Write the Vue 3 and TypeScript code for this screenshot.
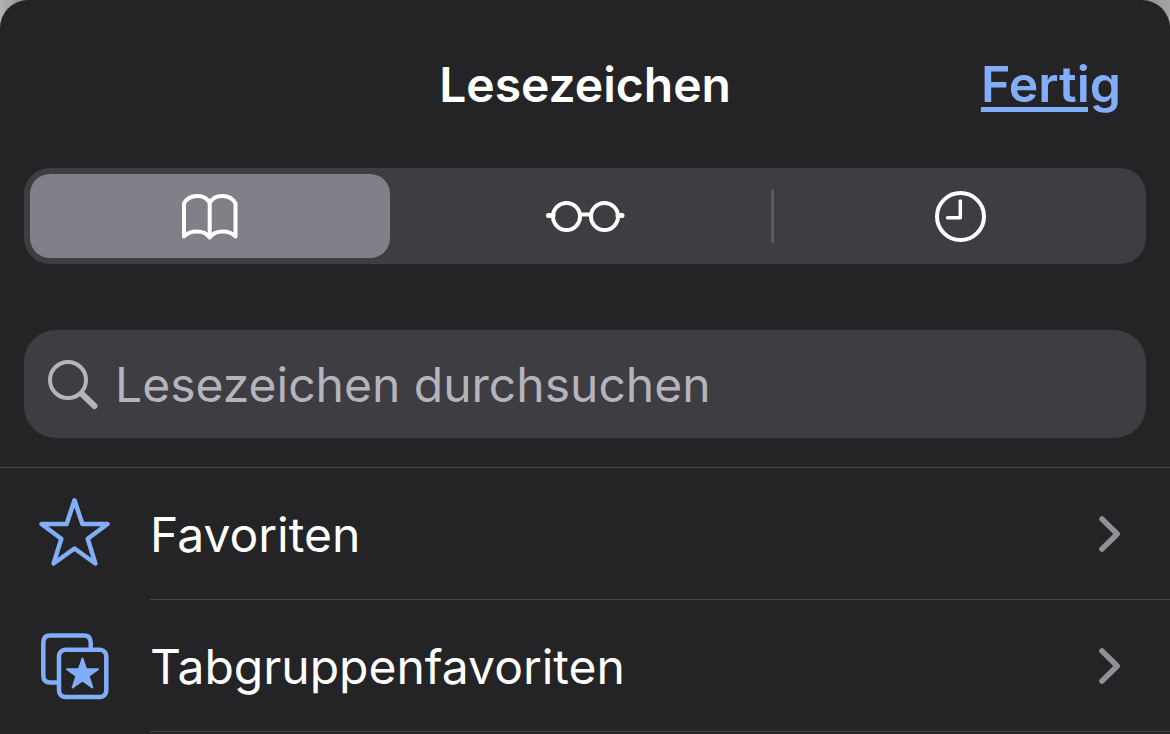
<script setup lang="ts">
import { ref } from 'vue'

type TabId = 'bookmarks' | 'reading' | 'history'

interface Tab {
  id: TabId
  label: string
}

interface Folder {
  id: 'favorites' | 'tabgroups'
  title: string
}

const tabs: Tab[] = [
  { id: 'bookmarks', label: 'Lesezeichen' },
  { id: 'reading', label: 'Leseliste' },
  { id: 'history', label: 'Verlauf' },
]

const folders: Folder[] = [
  { id: 'favorites', title: 'Favoriten' },
  { id: 'tabgroups', title: 'Tabgruppenfavoriten' },
]

const activeTab = ref<TabId>('bookmarks')
const query = ref('')
</script>

<template>
  <main class="sheet">
    <header class="header">
      <h1 class="title">Lesezeichen</h1>
      <button class="done" type="button">Fertig</button>
    </header>

    <div class="tabs" role="tablist">
      <button
        v-for="tab in tabs"
        :key="tab.id"
        class="tab"
        :class="{ active: tab.id === activeTab, divided: tab.id === 'history' && activeTab === 'bookmarks' }"
        type="button"
        role="tab"
        :aria-label="tab.label"
        :aria-selected="tab.id === activeTab"
        @click="activeTab = tab.id"
      >
        <svg v-if="tab.id === 'bookmarks'" class="tab-icon" width="80" height="60" viewBox="0 0 80 60" aria-hidden="true">
          <path d="M39.700 17C35 7.500 19 7.500 14 17.500V50.500C20 44 34 43.500 39.700 51.500C45.500 43.500 59.500 44 65.500 50.500V17.500C60.500 7.500 44.500 7.500 39.700 17V51" />
        </svg>
        <svg v-else-if="tab.id === 'reading'" class="tab-icon" width="80" height="60" viewBox="0 0 80 60" aria-hidden="true">
          <circle cx="21.500" cy="30.500" r="13.500" />
          <circle cx="59.500" cy="30.500" r="13.500" />
          <path d="M35 28.500H46" />
          <path d="M3.500 29.500H8M73 29.500H77" class="temple" />
        </svg>
        <svg v-else class="tab-icon" width="80" height="60" viewBox="0 0 80 60" aria-hidden="true">
          <circle cx="40.500" cy="30.500" r="23.500" />
          <path d="M40.300 15V31.700H27.500" class="hands" />
        </svg>
      </button>
    </div>

    <label class="search">
      <svg class="search-icon" width="52" height="52" viewBox="0 0 52 52" aria-hidden="true">
        <circle cx="21" cy="22" r="18" />
        <path d="M35 36L47.500 48" />
      </svg>
      <input v-model="query" class="search-input" type="text" placeholder="Lesezeichen durchsuchen" aria-label="Lesezeichen durchsuchen" />
    </label>

    <nav class="list" aria-label="Ordner">
      <a v-for="folder in folders" :key="folder.id" class="row" :href="'#' + folder.id">
        <svg v-if="folder.id === 'favorites'" class="row-icon" width="80" height="80" viewBox="0 0 80 80" aria-hidden="true">
          <path d="M39.500 6.300L47.400 30H72.500L52.700 44.800L60.400 69.500L39.500 54.500L18.600 69.500L26.300 44.800L6.500 30H31.600Z" />
        </svg>
        <svg v-else class="row-icon" width="80" height="80" viewBox="0 0 80 80" aria-hidden="true">
          <path d="M24 56.500H15.300Q8.300 56.500 8.300 49.500V16.500Q8.300 9.500 15.300 9.500H48.700Q55.700 9.500 55.700 16.500V23" class="pane" />
          <rect x="24" y="23.700" width="47.300" height="47.300" rx="6.500" class="pane" />
          <path d="M47.500 32.500L51.100 43.300H63L53.600 50L57.400 61.500L47.500 54.500L37.600 61.500L41.400 50L32 43.300H43.900Z" class="solid" />
        </svg>
        <span class="row-body">
          <span class="row-title">{{ folder.title }}</span>
          <svg class="chevron" width="24" height="40" viewBox="0 0 24 40" aria-hidden="true">
            <path d="M5 5L20.200 20L5 35" />
          </svg>
        </span>
      </a>
    </nav>
  </main>
</template>

<style>
body {
  margin: 0;
  background: linear-gradient(90deg, #b4b4b4, #8c8c8c 26px, #929292 calc(100% - 26px), #a4a4a4);
}
</style>

<style scoped>
.sheet {
  box-sizing: border-box;
  min-height: 100vh;
  border-radius: 28px 28px 0 0;
  background: #242426;
  color: #fff;
  font-family: Inter, "Liberation Sans", sans-serif;
  font-size: 48px;
  line-height: 60px;
}

.header {
  display: grid;
  grid-template-columns: 1fr auto 1fr;
  align-items: baseline;
  height: 168px;
  padding: 54px 49px 0;
  box-sizing: border-box;
}

.title {
  grid-column: 2;
  margin: 0;
  font-size: 48px;
  font-weight: 600;
}

.done {
  justify-self: end;
  padding: 0;
  border: 0;
  background: none;
  color: #82adf9;
  font: inherit;
  font-size: 50px;
  font-weight: 600;
  text-decoration: underline;
  text-decoration-thickness: 5px;
  text-underline-offset: 5px;
}

.tabs {
  display: grid;
  grid-template-columns: repeat(3, 1fr);
  gap: 15px;
  margin: 0 24px;
  padding: 6px;
  border-radius: 26px;
  background: #3e3d42;
}

.tab {
  position: relative;
  display: flex;
  align-items: center;
  justify-content: center;
  height: 84px;
  padding: 0;
  border: 0;
  border-radius: 20px;
  background: none;
  color: #fff;
}

.tab.active {
  background: #818088;
}

.tab.divided::before {
  content: "";
  position: absolute;
  left: -9px;
  top: 15px;
  bottom: 15px;
  width: 3px;
  border-radius: 2px;
  background: #5a5a5f;
}

.tab-icon {
  fill: none;
  stroke: currentColor;
  stroke-width: 4;
  stroke-linecap: round;
  stroke-linejoin: round;
}

.temple {
  stroke-width: 5;
}

.hands {
  stroke-width: 3.5;
}

.search {
  display: flex;
  align-items: center;
  gap: 16px;
  height: 108px;
  margin: 66px 24px 29px;
  padding: 0 23px;
  border-radius: 32px;
  box-sizing: border-box;
  background: #3e3d42;
}

.search-icon {
  flex: none;
  fill: none;
  stroke: #b5b4bd;
  stroke-width: 4;
  stroke-linecap: round;
}

.search-icon path {
  stroke-width: 6;
}

.search-input {
  flex: 1;
  min-width: 0;
  height: 60px;
  padding: 2px 0 0;
  border: 0;
  outline: 0;
  background: none;
  color: #fff;
  font: inherit;
}

.search-input::placeholder {
  color: #b5b4bd;
  opacity: 1;
}

.list {
  border-top: 1px solid #464649;
}

.row {
  display: flex;
  align-items: center;
  gap: 35px;
  padding-left: 35px;
  color: inherit;
  text-decoration: none;
}

.row-icon {
  flex: none;
  fill: none;
  stroke: #82adf9;
  stroke-width: 4.5;
  stroke-linecap: round;
  stroke-linejoin: round;
}

.pane {
  stroke-linecap: butt;
}

.solid {
  fill: #82adf9;
  stroke-width: 2;
}

.row-body {
  display: flex;
  flex: 1;
  align-items: center;
  justify-content: space-between;
  height: 131px;
  padding-right: 49px;
  border-bottom: 1px solid #464649;
}

.row-title {
  padding-top: 2px;
}

.chevron {
  flex: none;
  fill: none;
  stroke: #919096;
  stroke-width: 5.5;
  stroke-linecap: round;
  stroke-linejoin: round;
}
</style>
